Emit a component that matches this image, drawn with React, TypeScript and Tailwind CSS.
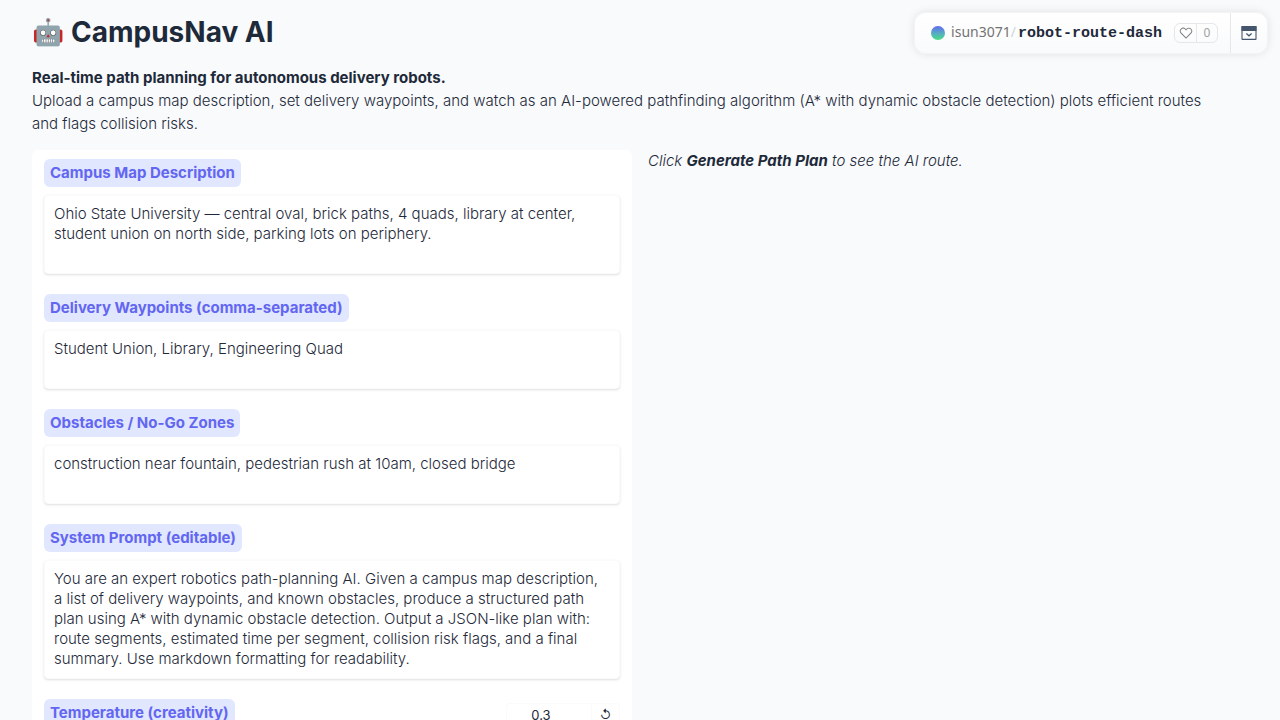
import { useState } from "react";

const SAMPLE_FIELDS = [
  {
    id: "map",
    label: "Campus Map Description",
    rows: 3,
    value:
      "Ohio State University — central oval, brick paths, 4 quads, library at center, student union on north side, parking lots on periphery.",
  },
  {
    id: "waypoints",
    label: "Delivery Waypoints (comma-separated)",
    rows: 2,
    value: "Student Union, Library, Engineering Quad",
  },
  {
    id: "obstacles",
    label: "Obstacles / No-Go Zones",
    rows: 2,
    value: "construction near fountain, pedestrian rush at 10am, closed bridge",
  },
  {
    id: "prompt",
    label: "System Prompt (editable)",
    rows: 5,
    value:
      "You are an expert robotics path-planning AI. Given a campus map description, a list of delivery waypoints, and known obstacles, produce a structured path plan using A* with dynamic obstacle detection. Output a JSON-like plan with: route segments, estimated time per segment, collision risk flags, and a final summary. Use markdown formatting for readability.",
  },
];

const labelClass =
  "inline-block rounded-md bg-indigo-100 px-1.5 py-1 text-[15px] leading-5 font-bold text-[#6366f1]";

function SpaceBadge() {
  return (
    <div className="absolute top-3 right-3 flex h-[42px] items-stretch rounded-xl border border-gray-100 bg-linear-to-b from-white to-gray-50 font-['Noto_Sans',sans-serif] shadow-[0_0_8px_rgba(0,0,0,0.1)]">
      <div className="flex items-center pr-3 pl-4">
        <span className="mr-1.5 size-3.5 rounded-full bg-linear-to-b from-[#6366f1] to-[#4ade80]" />
        <div className="flex items-baseline text-[14px] leading-5">
          <a href="#owner" className="text-neutral-500">
            isun3071
          </a>
          <span className="mr-0.5 text-gray-300">/</span>
          <a
            href="#space"
            className="font-['Liberation_Mono',monospace] text-[15px] font-bold text-gray-800"
          >
            robot-route-dash
          </a>
        </div>
        <button
          type="button"
          aria-label="Like"
          className="ml-3 flex h-5 items-stretch rounded-md border border-gray-200 text-[12px] leading-[18px] text-neutral-400"
        >
          <span className="flex w-[22px] items-center justify-center border-r border-gray-200">
            <svg viewBox="0 0 32 32" className="size-3.5 text-neutral-500" fill="currentColor">
              <path d="M22.45 6a5.47 5.47 0 0 1 3.91 1.64 5.7 5.7 0 0 1 0 8L16 26.13 5.64 15.64a5.7 5.7 0 0 1 0-8 5.48 5.48 0 0 1 7.82 0L16 10.24l2.53-2.58A5.44 5.44 0 0 1 22.45 6m0-2a7.47 7.47 0 0 0-5.34 2.24L16 7.36l-1.11-1.12a7.49 7.49 0 0 0-10.68 0 7.72 7.72 0 0 0 0 10.82L16 29l11.79-11.94a7.72 7.72 0 0 0 0-10.82A7.49 7.49 0 0 0 22.45 4Z" />
            </svg>
          </span>
          <span className="w-5 text-center">0</span>
        </button>
      </div>
      <button
        type="button"
        aria-label="Collapse"
        className="flex w-[37px] items-center justify-center border-l border-gray-200"
      >
        <svg viewBox="0 0 16 14" className="h-3.5 w-4 text-slate-600" fill="none" stroke="currentColor">
          <rect x="1" y="0.6" width="14" height="12.8" rx="0.5" strokeWidth="1.1" />
          <path d="M.5 0h15v5H.5z" fill="currentColor" stroke="none" />
          <path d="m5.4 7.6 2.6 2.2 2.6-2.2" strokeWidth="1.3" />
        </svg>
      </button>
    </div>
  );
}

export default function App() {
  const [temperature, setTemperature] = useState("0.3");

  return (
    <div className="relative flex min-h-screen flex-col bg-[#f8fafc] px-8 pt-4 font-[Inter,sans-serif] text-gray-800">
      <SpaceBadge />

      <header>
        <h1 className="flex items-center gap-[7px] text-[28px] leading-8 font-bold">
          <span className="text-[26px]">🤖</span>
          CampusNav AI
        </h1>
        <p className="mt-[18px] pr-5 text-[15px] leading-[23px] font-light">
          <strong className="font-bold">
            Real-time path planning for autonomous delivery robots.
          </strong>
          <br />
          Upload a campus map description, set delivery waypoints, and watch as an AI-powered
          pathfinding algorithm (A* with dynamic obstacle detection) plots efficient routes and
          flags collision risks.
        </p>
      </header>

      <main className="mt-[15px] grid grow grid-cols-2 gap-4">
        <form className="flex flex-col gap-5 rounded-t-md bg-white px-3 pt-[9px]">
          {SAMPLE_FIELDS.map((field) => (
            <div key={field.id}>
              <label htmlFor={field.id} className={labelClass}>
                {field.label}
              </label>
              <textarea
                id={field.id}
                rows={field.rows}
                defaultValue={field.value}
                className="mt-2 block w-full resize-none overflow-hidden rounded border border-gray-50 bg-white px-[9px] pt-2 pb-[9px] text-[15px] leading-5 font-light shadow-sm"
              />
            </div>
          ))}

          <div className="flex items-start justify-between">
            <label htmlFor="temperature" className={labelClass}>
              Temperature (creativity)
            </label>
            <div className="mt-1 flex h-6 items-stretch rounded border border-gray-50 text-[13px]">
              <input
                id="temperature"
                value={temperature}
                onChange={(e) => setTemperature(e.target.value)}
                className="w-[84px] pt-0.5 pr-4 text-center"
              />
              <button
                type="button"
                aria-label="Reset temperature"
                onClick={() => setTemperature("0.3")}
                className="w-7 border-l border-gray-50 text-[12px]"
              >
                ↺
              </button>
            </div>
          </div>
        </form>

        <p className="text-[15px] leading-[22px] font-light italic">
          Click <strong className="font-bold">Generate Path Plan</strong> to see the AI route.
        </p>
      </main>
    </div>
  );
}
